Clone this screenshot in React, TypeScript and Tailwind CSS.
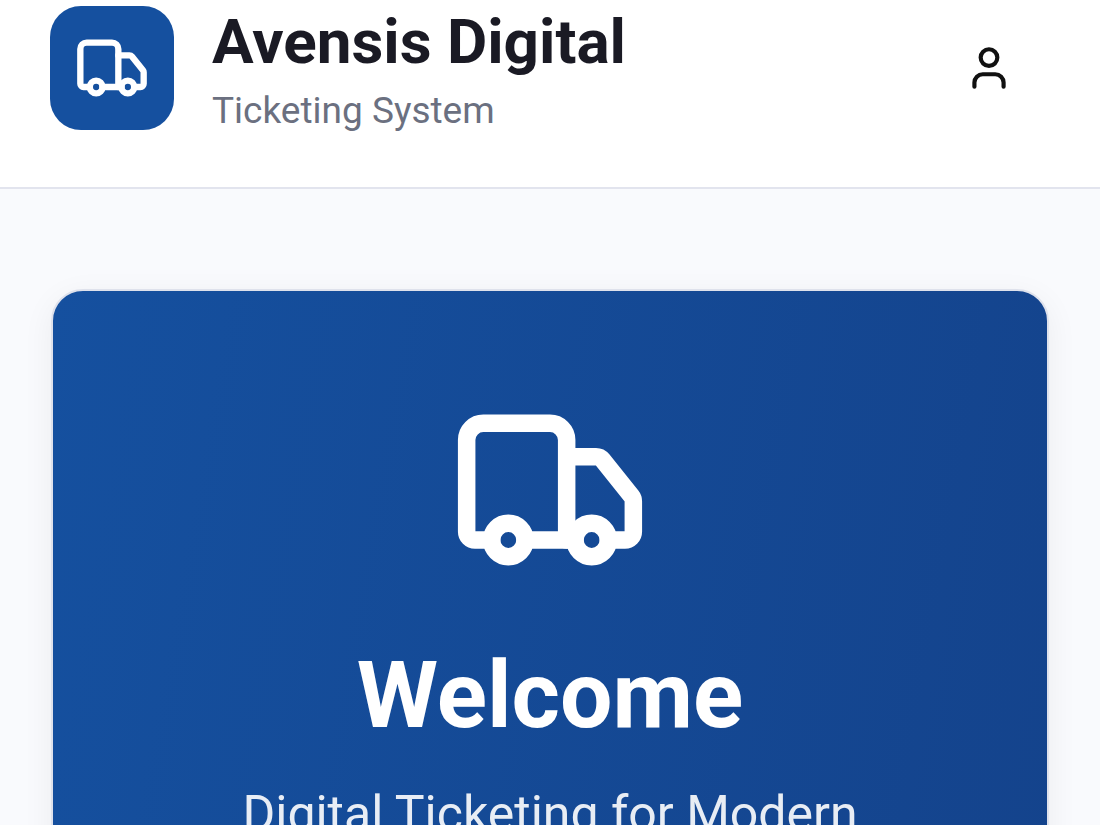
import { Truck, User } from "lucide-react";

export default function App() {
  return (
    <div className="h-[825px] overflow-hidden bg-[#f9fafd]" style={{ fontFamily: "Roboto, sans-serif" }}>
      {/* Header */}
      <header className="h-[189px] bg-white border-b-2 border-[#e2e4ee] flex items-start pl-[50px] pr-[86px] pt-[6px]">
        <div className="w-[124px] h-[124px] rounded-[31px] bg-[#15509f] flex items-center justify-center">
          <Truck size={76} color="white" strokeWidth={2} />
        </div>
        <div className="ml-[38px] flex-1">
          <h1 className="text-[62px] leading-[72px] font-bold text-[#1a1a24]">Avensis Digital</h1>
          <p className="text-[37px] leading-[44px] mt-[11px] text-[#6b7080]">Ticketing System</p>
        </div>
        <div className="mt-[37px]">
          <User size={50} color="#111111" strokeWidth={2} />
        </div>
      </header>

      {/* Welcome card */}
      <main className="px-[51px] pt-[100px]">
        <section className="h-[700px] rounded-[32px] border-2 border-[#dfe2ec] bg-[linear-gradient(100deg,#15509f,#14438c)] shadow-[0_8px_32px_rgba(0,0,0,0.06)] flex flex-col items-center pt-[99px] text-white">
          <Truck size={200} color="white" strokeWidth={2.1} />
          <h2 className="mt-[50px] text-[93px] leading-[112px] font-bold">Welcome</h2>
          <p className="mt-[32px] text-[50px] leading-[60px] font-normal text-white/90">Digital Ticketing for Modern</p>
        </section>
      </main>
    </div>
  );
}
